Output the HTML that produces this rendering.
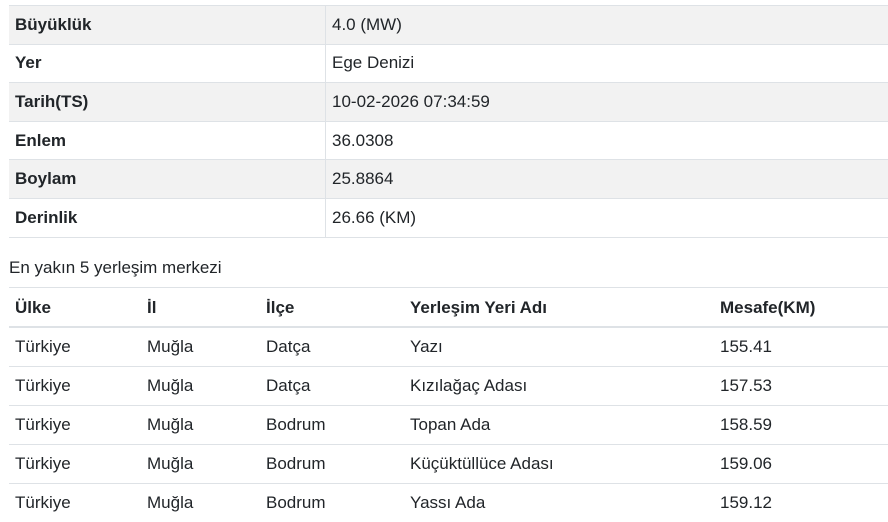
<!DOCTYPE html>
<html><head><meta charset="utf-8"><style>
body{margin:0;background:#fff;font-family:"Liberation Sans",sans-serif;color:#212529;font-size:17px;}
table{border-collapse:collapse;position:absolute;left:9px;width:879px;}
td,th{padding:0 6px;height:38px;border-top:1px solid #dee2e6;text-align:left;vertical-align:middle;}
#t1 td{height:37.6px;}
#t1{top:5px;}
#t1 tr:nth-child(odd) td{background:#f2f2f2;}
#t1 td:first-child{font-weight:bold;width:304px;border-right:1px solid #dee2e6;}
#t1 tr:last-child td{border-bottom:1px solid #dee2e6;}
h4{position:absolute;left:9px;top:258px;margin:0;font-size:17px;font-weight:normal;}
#t2{top:287px;}
#t2 th{font-weight:bold;border-bottom:2px solid #dee2e6;height:37px;padding-top:1px;}
</style></head><body>
<table id="t1">
<tr><td>Büyüklük</td><td>4.0 (MW)</td></tr>
<tr><td>Yer</td><td>Ege Denizi</td></tr>
<tr><td>Tarih(TS)</td><td>10-02-2026 07:34:59</td></tr>
<tr><td>Enlem</td><td>36.0308</td></tr>
<tr><td>Boylam</td><td>25.8864</td></tr>
<tr><td>Derinlik</td><td>26.66 (KM)</td></tr>
</table>
<h4>En yakın 5 yerleşim merkezi</h4>
<table id="t2">
<colgroup><col style="width:132px"><col style="width:119px"><col style="width:144px"><col style="width:310px"><col></colgroup>
<tr><th>Ülke</th><th>İl</th><th>İlçe</th><th>Yerleşim Yeri Adı</th><th>Mesafe(KM)</th></tr>
<tr><td>Türkiye</td><td>Muğla</td><td>Datça</td><td>Yazı</td><td>155.41</td></tr>
<tr><td>Türkiye</td><td>Muğla</td><td>Datça</td><td>Kızılağaç Adası</td><td>157.53</td></tr>
<tr><td>Türkiye</td><td>Muğla</td><td>Bodrum</td><td>Topan Ada</td><td>158.59</td></tr>
<tr><td>Türkiye</td><td>Muğla</td><td>Bodrum</td><td>Küçüktüllüce Adası</td><td>159.06</td></tr>
<tr><td>Türkiye</td><td>Muğla</td><td>Bodrum</td><td>Yassı Ada</td><td>159.12</td></tr>
</table>
</body></html>
